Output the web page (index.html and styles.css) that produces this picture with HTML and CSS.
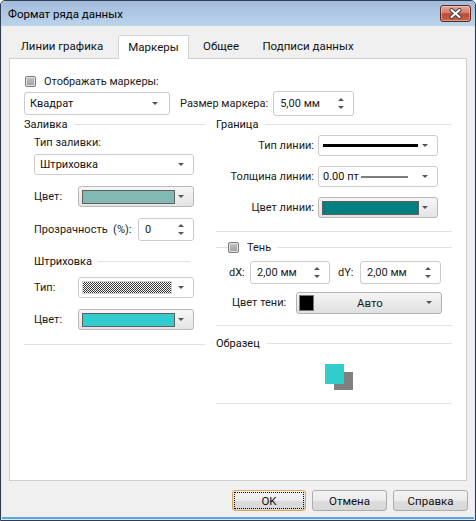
FILE: index.html
```html
<!DOCTYPE html>
<html>

<head lang="ru">
    <meta charset="UTF-8">
    <title>Формат ряда данных</title>
    <link rel="stylesheet" href="styles.css">
</head>

<body>
    <div class="window">
        <div class="titlebar">
            <span class="title">Формат ряда данных</span>
            <div class="close-btn">
                <svg width="13" height="11" viewBox="0 0 13 11">
                    <path d="M2.5 2 L10.5 9 M10.5 2 L2.5 9" stroke="#3b3b3b" stroke-width="4" stroke-linecap="round" />
                    <path d="M2.5 2 L10.5 9 M10.5 2 L2.5 9" stroke="#ffffff" stroke-width="2.2" stroke-linecap="round" />
                </svg>
            </div>
        </div>

        <div class="client">
            <div class="tabs">
                <div class="tab tab-lines">Линии графика</div>
                <div class="tab tab-markers active">Маркеры</div>
                <div class="tab tab-common">Общее</div>
                <div class="tab tab-labels">Подписи данных</div>
            </div>

            <div class="panel">
                <div class="row-check">
                    <span class="checkbox"></span>
                    <span>Отображать маркеры:</span>
                </div>

                <div class="row-marker">
                    <div class="combo combo-shape">
                        <span class="combo-text">Квадрат</span>
                        <span class="arrow"></span>
                    </div>
                    <span class="size-label">Размер маркера:</span>
                    <div class="spin spin-size">
                        <span class="spin-text">5,00 мм</span>
                        <span class="spin-arrows"><i class="up"></i><i class="down"></i></span>
                    </div>
                </div>

                <div class="columns">
                    <!-- заливка -->
                    <div class="col-left">
                        <div class="group-head"><span>Заливка</span><span class="line"></span></div>

                        <div class="caption">Тип заливки:</div>
                        <div class="combo combo-fill">
                            <span class="combo-text">Штриховка</span>
                            <span class="arrow"></span>
                        </div>

                        <div class="form-row row-fill-color">
                            <span class="lbl lbl-short">Цвет:</span>
                            <div class="color-combo">
                                <span class="swatch sw-fill"></span>
                                <span class="arrow"></span>
                            </div>
                        </div>

                        <div class="form-row row-opacity">
                            <span class="lbl lbl-opacity">Прозрачность&nbsp; (%):</span>
                            <div class="spin spin-opacity">
                                <span class="spin-text">0</span>
                                <span class="spin-arrows"><i class="up"></i><i class="down"></i></span>
                            </div>
                        </div>

                        <div class="sub-head"><span>Штриховка</span><span class="line"></span></div>

                        <div class="form-row row-hatch-type">
                            <span class="lbl lbl-short">Тип:</span>
                            <div class="combo combo-pattern">
                                <span class="swatch sw-pattern"></span>
                                <span class="arrow"></span>
                            </div>
                        </div>

                        <div class="form-row row-hatch-color">
                            <span class="lbl lbl-short">Цвет:</span>
                            <div class="color-combo">
                                <span class="swatch sw-cyan"></span>
                                <span class="arrow"></span>
                            </div>
                        </div>

                        <div class="separator sep-left"></div>
                    </div>

                    <!-- граница -->
                    <div class="col-right">
                        <div class="group-head"><span>Граница</span><span class="line"></span></div>

                        <div class="form-row row-line-type">
                            <span class="lbl lbl-right">Тип линии:</span>
                            <div class="combo combo-line">
                                <span class="line-solid"></span>
                                <span class="arrow"></span>
                            </div>
                        </div>

                        <div class="form-row row-line-width">
                            <span class="lbl lbl-right">Толщина линии:</span>
                            <div class="combo combo-line">
                                <span class="combo-text">0.00 пт</span>
                                <span class="line-thin"></span>
                                <span class="arrow"></span>
                            </div>
                        </div>

                        <div class="form-row row-line-color">
                            <span class="lbl lbl-right">Цвет линии:</span>
                            <div class="color-combo color-combo-line">
                                <span class="swatch sw-teal"></span>
                                <span class="arrow"></span>
                            </div>
                        </div>

                        <div class="separator sep-border"></div>

                        <div class="shadow-head">
                            <span class="line line-lead"></span>
                            <span class="checkbox"></span>
                            <span class="shadow-title">Тень</span>
                            <span class="line"></span>
                        </div>

                        <div class="form-row row-offsets">
                            <span class="lbl lbl-dx">dX:</span>
                            <div class="spin spin-offset">
                                <span class="spin-text">2,00 мм</span>
                                <span class="spin-arrows"><i class="up"></i><i class="down"></i></span>
                            </div>
                            <span class="lbl lbl-dy">dY:</span>
                            <div class="spin spin-offset spin-dy">
                                <span class="spin-text">2,00 мм</span>
                                <span class="spin-arrows"><i class="up"></i><i class="down"></i></span>
                            </div>
                        </div>

                        <div class="form-row row-shadow-color">
                            <span class="lbl lbl-shadow">Цвет тени:</span>
                            <div class="auto-combo">
                                <span class="auto-swatch"></span>
                                <span class="auto-text">Авто</span>
                                <span class="arrow"></span>
                            </div>
                        </div>

                        <div class="separator sep-shadow"></div>

                        <div class="group-head head-sample"><span>Образец</span><span class="line"></span></div>

                        <div class="sample">
                            <div class="sample-box">
                                <span class="sample-shadow"></span>
                                <span class="sample-marker"></span>
                            </div>
                        </div>

                        <div class="separator sep-sample"></div>
                    </div>
                </div>
            </div>

            <div class="buttons">
                <button type="button" class="btn btn-ok">OK</button>
                <button type="button" class="btn">Отмена</button>
                <button type="button" class="btn">Справка</button>
            </div>
        </div>
    </div>
</body>

</html>
```

FILE: styles.css
```css
* {
    margin: 0;
    padding: 0;
    box-sizing: border-box;
}

body {
    font-family: Roboto, "Open Sans", sans-serif;
    font-size: 11px;
    color: #1b1b1b;
    background: #ffffff;
}

.window {
    width: 476px;
    height: 521px;
    border: 1px solid #2f3d4f;
    border-radius: 5px 5px 0 0;
    background: #b5cde8;
    box-shadow: inset 0 0 0 1px #dbe8f5;
    display: flex;
    flex-direction: column;
    overflow: hidden;
}

/* заголовок окна */
.titlebar {
    height: 25px;
    display: flex;
    justify-content: space-between;
    align-items: flex-start;
    padding: 0 4px 0 7px;
    background: linear-gradient(#a2bcdb, #bcd3eb);
}

.title {
    font-size: 11.5px;
    line-height: 26px;
    color: #000;
}

.close-btn {
    width: 31px;
    height: 17px;
    margin-top: 4px;
    border: 1px solid #5c2a22;
    border-radius: 3px;
    background: linear-gradient(#e4a596 0%, #d57e6b 45%, #bd4a33 52%, #c9634b 100%);
    box-shadow: inset 0 0 0 1px rgba(255, 255, 255, 0.35);
    display: flex;
    align-items: center;
    justify-content: center;
}

.client {
    flex: 1;
    margin: 0 1px 1px 1px;
    background: #f0f0f0;
    border-bottom: 2px solid #5aa7de;
    padding: 9px 0 0 7px;
}

/* вкладки */
.tabs {
    display: flex;
    height: 23px;
}

.tab {
    height: 23px;
    line-height: 22px;
    text-align: center;
    color: #111;
    font-size: 11.5px;
}

.tab-lines {
    width: 104px;
    margin-left: 1px;
}

.tab-markers {
    width: 71px;
    margin-left: 4px;
}

.tab-common {
    width: 64px;
}

.tab-labels {
    width: 110px;
}

.tab.active {
    position: relative;
    z-index: 1;
    height: 24px;
    background: #fff;
    border: 1px solid #d3d3d3;
    border-bottom: none;
    border-radius: 2px 2px 0 0;
}

.panel {
    width: 458px;
    height: 423px;
    background: #fff;
    border: 1px solid #cfcfcf;
    padding: 0 0 0 14px;
}

/* общие элементы */
.checkbox {
    display: inline-block;
    width: 11px;
    height: 11px;
    border: 1px solid #7c7c7c;
    border-radius: 2px;
    background: linear-gradient(#c4c4c4, #9e9e9e);
    box-shadow: inset 0 0 0 1px #e2e2e2;
}

.arrow {
    width: 0;
    height: 0;
    border-left: 3px solid transparent;
    border-right: 3px solid transparent;
    border-top: 3px solid #555;
    margin-left: auto;
}

.combo {
    display: flex;
    align-items: center;
    background: #fff;
    border: 1px solid #cdcdcd;
    border-radius: 3px;
    padding: 0 9px 0 5px;
}

.combo-text {
    color: #111;
}

.spin {
    display: flex;
    align-items: center;
    background: #fff;
    border: 1px solid #cdcdcd;
    border-radius: 3px;
    padding: 0 9px 0 6px;
}

.spin-arrows {
    margin-left: auto;
    display: flex;
    flex-direction: column;
    gap: 5px;
}

.spin-arrows i {
    display: block;
    width: 0;
    height: 0;
    border-left: 3px solid transparent;
    border-right: 3px solid transparent;
}

.spin-arrows .up {
    border-bottom: 3px solid #555;
}

.spin-arrows .down {
    border-top: 3px solid #555;
}

.color-combo {
    display: flex;
    align-items: center;
    width: 116px;
    height: 21px;
    border: 1px solid #b9b9b9;
    border-radius: 3px;
    background: linear-gradient(#f6f6f6, #e4e4e4);
    padding: 0 9px 0 3px;
}

.swatch {
    display: block;
    width: 93px;
    height: 14px;
    border: 1px solid #5f5f5f;
}

.sw-fill {
    background: #80bab3;
}

.sw-cyan {
    background: #33cccc;
}

.sw-teal {
    width: 97px;
    background: #008080;
}

.sw-pattern {
    width: 90px;
    height: 13px;
    border: 1px solid #d0d0d0;
    background: repeating-conic-gradient(#333 0 25%, #fff 0 50%) 0 0 / 2px 2px;
}

.form-row {
    display: flex;
    align-items: center;
    white-space: nowrap;
}

.group-head,
.sub-head {
    height: 14px;
    display: flex;
    align-items: center;
    color: #111;
}

.line {
    flex: 1;
    height: 1px;
    background: #e2e2e2;
}

.group-head .line {
    margin-left: 7px;
}

.separator {
    height: 1px;
    background: #e2e2e2;
}

/* верхние строки */
.row-check {
    height: 18px;
    margin-top: 13px;
    display: flex;
    align-items: center;
    gap: 8px;
    padding-left: 1px;
}

.row-marker {
    height: 25px;
    margin-top: 1px;
    display: flex;
    align-items: center;
    white-space: nowrap;
}

.combo-shape {
    width: 146px;
    height: 23px;
    padding-right: 11px;
}

.size-label {
    padding: 0 5px 0 10px;
}

.spin-size {
    width: 81px;
    height: 25px;
}

.columns {
    display: flex;
    margin-top: 1px;
    gap: 11px;
}

/* левая колонка */
.col-left {
    width: 181px;
    display: flex;
    flex-direction: column;
}

.caption {
    height: 14px;
    line-height: 14px;
    margin-top: 5px;
    padding-left: 10px;
}

.combo-fill {
    width: 160px;
    height: 21px;
    margin: 4px 0 0 10px;
}

.col-left .form-row {
    padding-left: 10px;
}

.lbl-short {
    width: 44px;
}

.row-fill-color {
    height: 21px;
    margin-top: 11px;
}

.row-opacity {
    height: 23px;
    margin-top: 11px;
}

.lbl-opacity {
    width: 104px;
}

.spin-opacity {
    width: 56px;
    height: 23px;
}

.sub-head {
    margin-top: 13px;
    padding: 0 15px 0 10px;
}

.sub-head .line {
    margin-left: 6px;
}

.row-hatch-type {
    height: 21px;
    margin-top: 9px;
}

.combo-pattern {
    width: 116px;
    height: 21px;
    padding-left: 3px;
}

.row-hatch-color {
    height: 21px;
    margin-top: 11px;
}

.sep-left {
    margin-top: 14px;
}

/* правая колонка */
.col-right {
    width: 236px;
    display: flex;
    flex-direction: column;
}

.lbl-right {
    width: 98px;
    text-align: right;
    margin-right: 4px;
}

.row-line-type {
    height: 21px;
    margin-top: 4px;
}

.row-line-width,
.row-line-color {
    height: 21px;
    margin-top: 10px;
}

.combo-line {
    width: 120px;
    height: 21px;
    padding-left: 4px;
}

.line-solid {
    width: 95px;
    height: 3px;
    background: #000;
}

.line-thin {
    width: 47px;
    height: 2px;
    margin-left: 2px;
    background: #7e7e7e;
}

.color-combo-line {
    width: 120px;
}

.sep-border {
    margin-top: 13px;
}

.shadow-head {
    height: 14px;
    margin-top: 8px;
    display: flex;
    align-items: center;
}

.line-lead {
    flex: 0 0 12px;
}

.shadow-title {
    margin: 0 6px 0 8px;
}

.row-offsets {
    height: 23px;
    margin-top: 7px;
    padding-left: 13px;
}

.lbl-dx {
    width: 21px;
}

.lbl-dy {
    width: 22px;
    margin-left: 8px;
}

.spin-offset {
    width: 80px;
    height: 23px;
}

.spin-dy {
    width: 81px;
}

.row-shadow-color {
    height: 21px;
    margin-top: 8px;
    padding-left: 16px;
}

.lbl-shadow {
    width: 64px;
}

.auto-combo {
    width: 146px;
    height: 22px;
    display: flex;
    align-items: center;
    border: 1px solid #b3b3b3;
    border-radius: 3px;
    background: linear-gradient(#f5f5f5, #e0e0e0);
    padding: 0 9px 0 2px;
}

.auto-swatch {
    width: 15px;
    height: 16px;
    background: #000;
    border: 1px solid #777;
}

.auto-text {
    flex: 1;
    text-align: center;
    font-size: 11.5px;
}

.sep-shadow {
    margin-top: 12px;
}

.head-sample {
    margin-top: 10px;
}

.sample {
    height: 26px;
    margin-top: 14px;
    padding-left: 109px;
}

.sample-box {
    position: relative;
    width: 28px;
    height: 26px;
}

.sample-shadow {
    position: absolute;
    right: 0;
    bottom: 0;
    width: 19px;
    height: 18px;
    background: #808080;
}

.sample-marker {
    position: absolute;
    left: 0;
    top: 0;
    width: 19px;
    height: 20px;
    background: #33cccc radial-gradient(circle, #7fe0e0 35%, transparent 40%) 0 0 / 2px 2px;
}

.sep-sample {
    margin-top: 13px;
}

/* кнопки */
.buttons {
    display: flex;
    justify-content: flex-end;
    gap: 6px;
    margin-top: 9px;
    padding-right: 6px;
}

.btn {
    width: 75px;
    height: 21px;
    font-family: inherit;
    font-size: 11.5px;
    color: #111;
    border: 1px solid #acacac;
    border-radius: 3px;
    background: linear-gradient(#f3f3f3 0%, #ebebeb 50%, #dddddd 51%, #d7d7d7 100%);
}

.btn-ok {
    width: 74px;
    border-color: #d8a455;
    outline: 1px dotted #000;
    outline-offset: -3px;
}
```
